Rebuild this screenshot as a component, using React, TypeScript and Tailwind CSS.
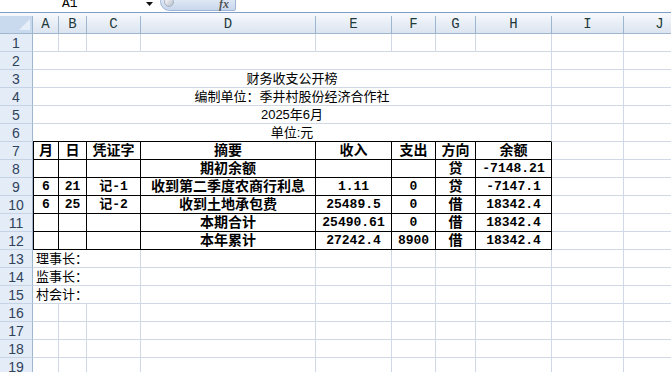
import React from 'react';

// column template: row header, A..J
const GRID = 'grid grid-cols-[33px_26px_28px_54px_175px_76px_44px_40px_76px_72px_72px]';
const LETTERS = ['A', 'B', 'C', 'D', 'E', 'F', 'G', 'H', 'I', 'J'];

const cell = 'h-[18px] border-r border-b border-[#d0d7e5] flex items-center justify-center whitespace-nowrap';
const tcell = 'h-[18px] border-r border-b border-black flex items-center justify-center whitespace-nowrap font-bold';
const cjk = "font-['Liberation_Sans','Noto_Sans_CJK_SC',sans-serif]";
const mono = "font-['Liberation_Mono','Noto_Sans_CJK_SC',monospace]";

const RowHead = ({ n }: { n: number }) => (
  <div className="h-[18px] bg-[#e4ecf7] border-r border-r-[#9eb6ce] border-b border-b-[#c5d3e5] flex items-center justify-center pt-[1px] text-[14px] text-[#30435c] font-['Liberation_Sans',sans-serif] font-light">
    {n}
  </div>
);

const Empty = ({ count }: { count: number }) => (
  <>
    {Array.from({ length: count }).map((_, i) => (
      <div key={i} className={cell} />
    ))}
  </>
);

// table body rows 8..12
const rows = [
  ['', '', '', '期初余额', '', '', '贷', '-7148.21'],
  ['6', '21', '记-1', '收到第二季度农商行利息', '1.11', '0', '贷', '-7147.1'],
  ['6', '25', '记-2', '收到土地承包费', '25489.5', '0', '借', '18342.4'],
  ['', '', '', '本期合计', '25490.61', '0', '借', '18342.4'],
  ['', '', '', '本年累计', '27242.4', '8900', '借', '18342.4'],
];
const headers = ['月', '日', '凭证字', '摘要', '收入', '支出', '方向', '余额'];

const TopBar = () => (
  <div className="relative h-[16px] bg-white">
    <div className="absolute left-0 top-0 h-[12px] w-full overflow-hidden">
      <span className="absolute left-[62px] top-[-3px] text-[13px] leading-[14px] text-black font-['Liberation_Mono',monospace]">A1</span>
      <svg className="absolute left-[146px] top-[2px]" width="7" height="4" viewBox="0 0 7 4">
        <polygon points="0,0 7,0 3.5,4" fill="#111" />
      </svg>
      <div className="absolute left-[160px] top-[-8px] h-[19px] w-[76px] rounded-l-[10px] rounded-r-[2px] border border-[#9fb5d5] bg-linear-to-b from-[#eef3fb] to-[#c8d7ec]">
        <div className="absolute left-[3px] top-[4px] h-[10px] w-[10px] rounded-full bg-linear-to-br from-white to-[#b7bfca] border border-[#a8b2c0]" />
        <span className="absolute right-[6px] top-[5px] text-[12px] italic font-bold leading-[12px] text-[#555] font-['Liberation_Serif',serif]">fx</span>
      </div>
    </div>
    <div className="absolute left-0 top-[12px] h-[1px] w-full bg-[#7f9fc9]" />
    <div className="absolute left-0 top-[13px] h-[3px] w-full bg-[#f4f7fb]" />
  </div>
);

const ColumnHeader = () => (
  <div className={GRID}>
    <div className="relative h-[18px] bg-[#c9d9ee] border-r border-b border-[#9eb6ce]">
      <svg className="absolute right-[2px] bottom-[3px]" width="11" height="11" viewBox="0 0 11 11">
        <polygon points="11,0 11,11 0,11" fill="#e6eef8" />
      </svg>
    </div>
    {LETTERS.map((l) => (
      <div
        key={l}
        className="h-[18px] bg-linear-to-b from-[#f3f6fb] to-[#dbe4f0] border-r border-r-[#9eb6ce] border-b border-b-[#9eb6ce] flex items-center justify-center text-[14px] text-[#1f3a3a] font-['Liberation_Mono',monospace]"
      >
        {l}
      </div>
    ))}
  </div>
);

export default function App() {
  return (
    <div className="w-[671px] h-[372px] overflow-hidden bg-white text-black">
      <TopBar />
      <ColumnHeader />

      <div className={`${GRID} text-[13px]`}>
        {/* row 1 */}
        <RowHead n={1} />
        <Empty count={10} />

        {/* row 2 */}
        <RowHead n={2} />
        <div className={`${cell} col-span-8`} />
        <Empty count={2} />

        {/* rows 3-6: title block */}
        <RowHead n={3} />
        <div className={`${cell} col-span-8 ${cjk}`}>财务收支公开榜</div>
        <Empty count={2} />

        <RowHead n={4} />
        <div className={`${cell} col-span-8 ${cjk}`}>编制单位：季井村股份经济合作社</div>
        <Empty count={2} />

        <RowHead n={5} />
        <div className={`${cell} col-span-8 ${cjk}`}>2025年6月</div>
        <Empty count={2} />

        <RowHead n={6} />
        <div className={`${cell} col-span-8 border-b-black ${cjk}`}>单位:元</div>
        <Empty count={2} />

        {/* row 7: table header */}
        <RowHead n={7} />
        {headers.map((h, i) => (
          <div key={h} className={`${tcell} ${i === 0 ? 'border-l' : ''} text-[14px] ${cjk}`}>
            {h}
          </div>
        ))}
        <Empty count={2} />

        {/* rows 8-12 */}
        {rows.map((r, ri) => (
          <React.Fragment key={ri}>
            <RowHead n={8 + ri} />
            {r.map((v, i) => (
              <div
                key={i}
                className={`${tcell} ${i === 0 ? 'border-l' : ''} ${
                  i === 3 || i === 6 ? `text-[14px] ${cjk}` : `text-[13px] ${mono}`
                }`}
              >
                {v}
              </div>
            ))}
            <Empty count={2} />
          </React.Fragment>
        ))}

        {/* rows 13-15: signatures */}
        {['理事长：', '监事长：', '村会计：'].map((s, i) => (
          <React.Fragment key={s}>
            <RowHead n={13 + i} />
            <div className={`${cell} col-span-3 !justify-start pl-[3px] ${cjk}`}>{s}</div>
            <Empty count={7} />
          </React.Fragment>
        ))}

        {/* rows 16-19 */}
        {[16, 17, 18, 19].map((n) => (
          <React.Fragment key={n}>
            <RowHead n={n} />
            <Empty count={10} />
          </React.Fragment>
        ))}
      </div>
    </div>
  );
}
